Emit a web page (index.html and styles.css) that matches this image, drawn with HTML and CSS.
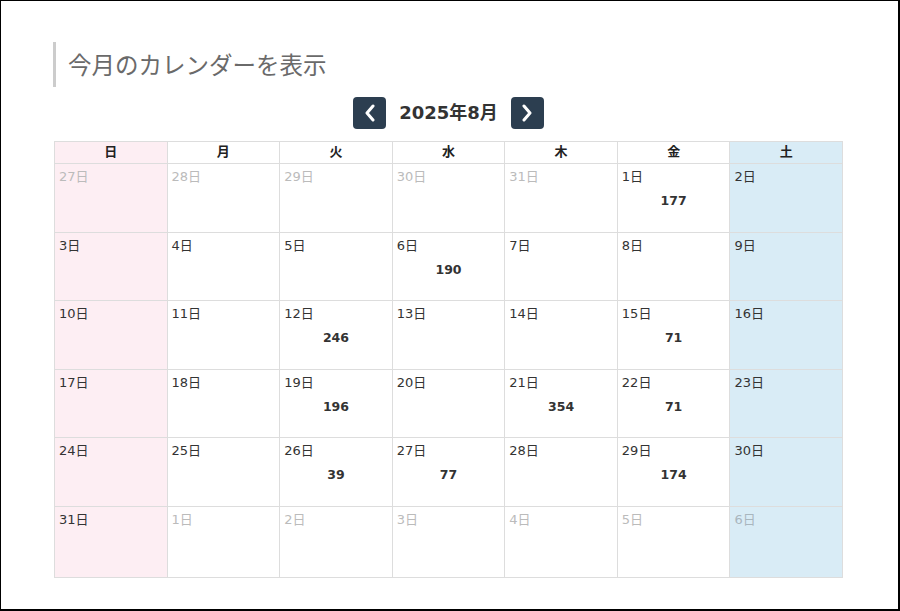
FILE: index.html
```html
<!DOCTYPE html>
<html lang="ja">
<head>
<meta charset="utf-8">
<title>カレンダー</title>
<link rel="stylesheet" href="styles.css">
</head>
<body>
<div class="frame">
  <h2 class="heading">今月のカレンダーを表示</h2>
  <div class="nav">
    <button class="nav-btn" aria-label="前月">
      <svg width="14" height="18" viewBox="0 0 14 18"><path d="M10 2 L4 9 L10 16" fill="none" stroke="#fff" stroke-width="3" stroke-linecap="round" stroke-linejoin="round"/></svg>
    </button>
    <div class="nav-title">2025年8月</div>
    <button class="nav-btn" aria-label="翌月">
      <svg width="14" height="18" viewBox="0 0 14 18"><path d="M4 2 L10 9 L4 16" fill="none" stroke="#fff" stroke-width="3" stroke-linecap="round" stroke-linejoin="round"/></svg>
    </button>
  </div>
  <div class="cal">
    <div class="hd sun">日</div>
    <div class="hd">月</div>
    <div class="hd">火</div>
    <div class="hd">水</div>
    <div class="hd">木</div>
    <div class="hd">金</div>
    <div class="hd sat">土</div>

    <div class="cell sun other"><span class="d">27日</span></div>
    <div class="cell other"><span class="d">28日</span></div>
    <div class="cell other"><span class="d">29日</span></div>
    <div class="cell other"><span class="d">30日</span></div>
    <div class="cell other"><span class="d">31日</span></div>
    <div class="cell"><span class="d">1日</span><span class="n">177</span></div>
    <div class="cell sat"><span class="d">2日</span></div>

    <div class="cell sun"><span class="d">3日</span></div>
    <div class="cell"><span class="d">4日</span></div>
    <div class="cell"><span class="d">5日</span></div>
    <div class="cell"><span class="d">6日</span><span class="n">190</span></div>
    <div class="cell"><span class="d">7日</span></div>
    <div class="cell"><span class="d">8日</span></div>
    <div class="cell sat"><span class="d">9日</span></div>

    <div class="cell sun"><span class="d">10日</span></div>
    <div class="cell"><span class="d">11日</span></div>
    <div class="cell"><span class="d">12日</span><span class="n">246</span></div>
    <div class="cell"><span class="d">13日</span></div>
    <div class="cell"><span class="d">14日</span></div>
    <div class="cell"><span class="d">15日</span><span class="n">71</span></div>
    <div class="cell sat"><span class="d">16日</span></div>

    <div class="cell sun"><span class="d">17日</span></div>
    <div class="cell"><span class="d">18日</span></div>
    <div class="cell"><span class="d">19日</span><span class="n">196</span></div>
    <div class="cell"><span class="d">20日</span></div>
    <div class="cell"><span class="d">21日</span><span class="n">354</span></div>
    <div class="cell"><span class="d">22日</span><span class="n">71</span></div>
    <div class="cell sat"><span class="d">23日</span></div>

    <div class="cell sun"><span class="d">24日</span></div>
    <div class="cell"><span class="d">25日</span></div>
    <div class="cell"><span class="d">26日</span><span class="n">39</span></div>
    <div class="cell"><span class="d">27日</span><span class="n">77</span></div>
    <div class="cell"><span class="d">28日</span></div>
    <div class="cell"><span class="d">29日</span><span class="n">174</span></div>
    <div class="cell sat"><span class="d">30日</span></div>

    <div class="cell sun"><span class="d">31日</span></div>
    <div class="cell other"><span class="d">1日</span></div>
    <div class="cell other"><span class="d">2日</span></div>
    <div class="cell other"><span class="d">3日</span></div>
    <div class="cell other"><span class="d">4日</span></div>
    <div class="cell other"><span class="d">5日</span></div>
    <div class="cell sat other"><span class="d">6日</span></div>
  </div>
</div>
</body>
</html>
```

FILE: styles.css
```css
* { box-sizing: border-box; }
html, body { margin: 0; padding: 0; background: #fff; }
body {
  font-family: "DejaVu Sans", "Noto Sans CJK JP", sans-serif;
  color: #333;
}
.frame {
  width: 900px;
  height: 611px;
  border-style: solid;
  border-color: #000;
  border-width: 1px 2px 2px 1px;
  padding: 41px 0 0 52px;
}
.heading {
  margin: 0;
  height: 45px;
  border-left: 3px solid #ccc;
  padding-left: 12px;
  font-family: "Noto Sans CJK JP", sans-serif;
  font-weight: 400;
  font-size: 23.5px;
  line-height: 44px;
  color: #6a6a6a;
  width: 790px;
}
.nav {
  width: 789px;
  margin: 10px 0 0 1px;
  height: 32px;
  display: flex;
  justify-content: center;
  align-items: center;
  gap: 13px;
}
.nav-btn {
  width: 33px;
  height: 32px;
  border: none;
  border-radius: 4px;
  background: #2c3e50;
  padding: 0;
  display: flex;
  align-items: center;
  justify-content: center;
}
.nav-title {
  font-weight: 700;
  font-size: 18px;
  color: #333;
  line-height: 32px;
}
.cal {
  margin: 12px 0 0 1px;
  width: 789px;
  display: grid;
  grid-template-columns: repeat(7, 1fr);
  grid-template-rows: 22px 69px 68px 69px 68px 69px 71px;
  border-top: 1px solid #ddd;
  border-left: 1px solid #ddd;
}
.hd {
  border-right: 1px solid #ddd;
  border-bottom: 1px solid #ddd;
  text-align: center;
  font-weight: 700;
  font-size: 13px;
  line-height: 20px;
  color: #222;
}
.cell {
  border-right: 1px solid #ddd;
  border-bottom: 1px solid #ddd;
  padding: 4px 4px;
  display: flex;
  flex-direction: column;
  align-items: stretch;
}
.sun { background: #fdeef3; }
.sat { background: #d9ecf6; }
.d {
  font-size: 13px;
  line-height: 18px;
  color: #333;
}
.other .d { color: #bbb; }
.sat.other .d { color: #a9b6be; }
.n {
  text-align: center;
  font-weight: 700;
  font-size: 12.5px;
  line-height: 16px;
  margin-top: 7px;
  color: #333;
}
```
